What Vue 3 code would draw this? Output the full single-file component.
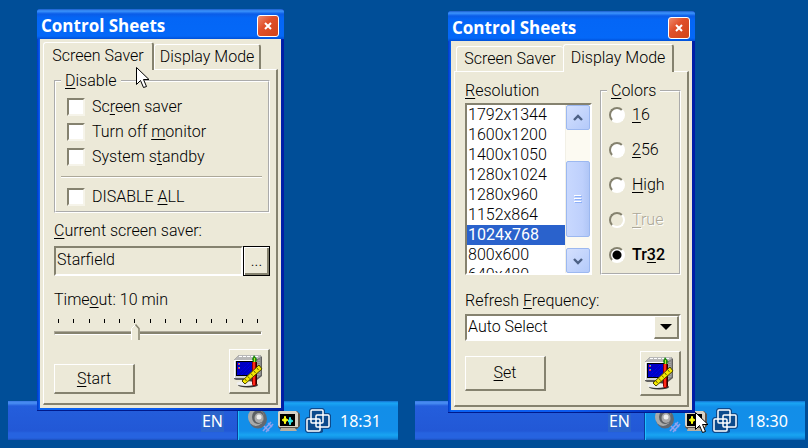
<script setup>
import { ref } from 'vue'

const screens = [
  { id: 'saver', active: 'saver', clock: '18:31' },
  { id: 'mode', active: 'mode', clock: '18:30' },
]

const tabs = [
  { id: 'saver', label: 'Screen Saver' },
  { id: 'mode', label: 'Display Mode' },
]

// label is split around the accelerator key
const disableOptions = [
  { id: 'screen', label: ['Sc', 'r', 'een saver'] },
  { id: 'monitor', label: ['Turn off ', 'm', 'onitor'] },
  { id: 'standby', label: ['System s', 't', 'andby'] },
]

const colors = [
  { id: '16', label: ['', '1', '6'] },
  { id: '256', label: ['', '2', '56'] },
  { id: 'high', label: ['', 'H', 'igh'] },
  { id: 'true', label: ['', 'T', 'rue'], disabled: true },
  { id: 'tr32', label: ['Tr', '3', '2'] },
]

const resolutions = [
  '1792x1344',
  '1600x1200',
  '1400x1050',
  '1280x1024',
  '1280x960',
  '1152x864',
  '1024x768',
  '800x600',
  '640x480',
]

const disabled = ref([])
const disableAll = ref(false)
const saver = ref('Starfield')
const timeout = ref(5)
const resolution = ref('1024x768')
const color = ref('tr32')
const frequency = ref('Auto Select')
</script>

<template>
  <main class="desktop">
    <section v-for="screen in screens" :key="screen.id" :class="['scene', `scene--${screen.id}`]">
      <div class="window">
        <header class="window__title">
          <h1 class="window__name">Control Sheets</h1>
          <button class="window__close" type="button" aria-label="Close">
            <svg width="8" height="8" viewBox="0 0 8 8"><path d="M1 1l6 6M7 1l-6 6" stroke="#fff" stroke-width="2" /></svg>
          </button>
        </header>

        <div class="window__body">
          <div class="tabs" role="tablist">
            <button
              v-for="tab in tabs"
              :key="tab.id"
              type="button"
              role="tab"
              :aria-selected="tab.id === screen.active"
              :class="['tab', { 'tab--active': tab.id === screen.active }]"
            >
              {{ tab.label }}
            </button>
          </div>

          <div v-if="screen.active === 'saver'" class="panel panel--saver">
            <fieldset class="group group--disable">
              <legend class="group__legend"><u>D</u>isable</legend>
              <label v-for="option in disableOptions" :key="option.id" class="check">
                <input v-model="disabled" class="check__box" type="checkbox" :value="option.id" />
                <span>{{ option.label[0] }}<u>{{ option.label[1] }}</u>{{ option.label[2] }}</span>
              </label>
              <hr class="group__line" />
              <label class="check">
                <input v-model="disableAll" class="check__box" type="checkbox" />
                <span>DISABLE <u>A</u>LL</span>
              </label>
            </fieldset>

            <label class="caption caption--current" for="current"><u>C</u>urrent screen saver:</label>
            <div class="current">
              <input id="current" v-model="saver" class="current__field" type="text" readonly />
              <button class="current__browse" type="button">...</button>
            </div>

            <label class="caption caption--timeout" for="timeout">Time<u>o</u>ut: 10 min</label>
            <div class="slider">
              <div class="slider__ticks"><i v-for="n in 14" :key="n" class="slider__tick"></i></div>
              <input id="timeout" v-model="timeout" class="slider__range" type="range" min="0" max="13" />
            </div>

            <div class="actions">
              <button class="button" type="button"><u>S</u>tart</button>
              <button class="button button--icon" type="button" aria-label="Display properties">
                <svg width="32" height="34"><use href="#display-icon" /></svg>
              </button>
            </div>
          </div>

          <div v-else class="panel panel--mode">
            <div class="columns">
              <div class="resolution">
                <span id="resolution" class="caption"><u>R</u>esolution</span>
                <div class="listbox">
                  <ul class="listbox__items" role="listbox" aria-labelledby="resolution">
                    <li
                      v-for="item in resolutions"
                      :key="item"
                      role="option"
                      :aria-selected="item === resolution"
                      :class="['listbox__item', { 'listbox__item--selected': item === resolution }]"
                      @click="resolution = item"
                    >
                      {{ item }}
                    </li>
                  </ul>
                  <div class="scroll">
                    <button class="scroll__button" type="button" aria-label="Up">
                      <svg width="10" height="8" viewBox="0 0 10 8"><path d="M1 6l4-4 4 4" fill="none" stroke="#4d6185" stroke-width="2.4" /></svg>
                    </button>
                    <div class="scroll__track">
                      <div class="scroll__thumb">
                        <svg width="8" height="9" viewBox="0 0 8 9"><path d="M0 .5h7M0 3.5h7M0 6.5h7" stroke="#fff" /><path d="M1 1.5h7M1 4.5h7M1 7.5h7" stroke="#8cb0f8" /></svg>
                      </div>
                    </div>
                    <button class="scroll__button" type="button" aria-label="Down">
                      <svg width="10" height="8" viewBox="0 0 10 8"><path d="M1 2l4 4 4-4" fill="none" stroke="#4d6185" stroke-width="2.4" /></svg>
                    </button>
                  </div>
                </div>
              </div>

              <fieldset class="group group--colors">
                <legend class="group__legend"><u>C</u>olors</legend>
                <label
                  v-for="item in colors"
                  :key="item.id"
                  :class="['radio', { 'radio--disabled': item.disabled, 'radio--current': item.id === color }]"
                >
                  <input v-model="color" class="radio__dot" type="radio" name="colors" :value="item.id" :disabled="item.disabled" />
                  <span>{{ item.label[0] }}<u>{{ item.label[1] }}</u>{{ item.label[2] }}</span>
                </label>
              </fieldset>
            </div>

            <label class="caption caption--frequency" for="frequency">Refresh <u>F</u>requency:</label>
            <div class="combo">
              <select id="frequency" v-model="frequency" class="combo__select">
                <option>Auto Select</option>
              </select>
              <span class="combo__arrow">
                <svg width="12" height="6" viewBox="0 0 12 6"><path d="M0 0h12l-6 6z" /></svg>
              </span>
            </div>

            <div class="actions actions--mode">
              <button class="button button--tall" type="button"><u>S</u>et</button>
              <button class="button button--icon" type="button" aria-label="Display properties">
                <svg width="32" height="34"><use href="#display-icon" /></svg>
              </button>
            </div>
          </div>
        </div>
      </div>

      <footer class="taskbar">
        <span class="taskbar__lang">EN</span>
        <div class="tray">
          <svg class="tray__speaker" width="26" height="26" viewBox="0 0 26 26">
            <ellipse cx="10" cy="11" rx="9" ry="9.5" fill="#626870" />
            <ellipse cx="8" cy="9" rx="8" ry="9" fill="#a9aaa9" />
            <ellipse cx="10" cy="9" rx="6" ry="7" fill="#5d6063" />
            <ellipse cx="11" cy="10" rx="4.5" ry="5" fill="#aaa" />
            <circle cx="11" cy="9" r="2.5" fill="#eee" />
            <path d="M15 23l8-9M18 24l7-8M16 18l5 5M20 15l4 4" stroke="#8fa2ee" stroke-width="1.6" />
          </svg>
          <svg class="tray__monitor" width="24" height="22" viewBox="0 0 24 22">
            <path d="M3 1h17l3 3v12l-3 3H3l-2-2V3z" fill="#5d564e" />
            <path d="M1 2l1-1h17l2 2v14H2l-1-2z" fill="#d8d2c4" />
            <path d="M4 18h14l2 3H3z" fill="#b9b09f" />
            <path d="M3 4h15v12H3z" fill="#000" />
            <path d="M8 6l1 3 2 1-2 1-1 3-1-3-2-1 2-1z" fill="#ffff10" stroke="#ffff10" />
            <path d="M13 7l1 3 2 1-2 1-1 3-1-3-1-1 1-1z" fill="#30e8e8" stroke="#30e8e8" />
          </svg>
          <svg class="tray__squares" width="26" height="26" viewBox="0 0 26 26">
            <path d="M6 0h12l2 2v3h4l2 2v12l-2 2h-6v3l-2 1H2l-2-2V11l2-2h2V2z" fill="#0c4a8c" />
            <g fill="none" stroke="#fff" stroke-width="1.5">
              <rect x="6" y="2" width="12" height="13" rx="1" />
              <rect x="11" y="7" width="13" height="12" rx="1" />
              <rect x="2" y="11" width="13" height="12" rx="1" />
            </g>
          </svg>
          <time class="tray__clock">{{ screen.clock }}</time>
        </div>
      </footer>

      <svg class="cursor" width="14" height="22" viewBox="0 0 14 22">
        <path d="M.5 .5v17l4-4 3 7 3-1-3-7h5.500z" fill="#fff" stroke="#000" />
      </svg>
    </section>

    <svg class="defs" width="0" height="0" aria-hidden="true">
      <symbol id="display-icon" viewBox="0 0 32 34">
        <path d="M6 1h21l2 2v19l-5 4H3l-2-1V6z" fill="#606060" />
        <path d="M6 1h21l1 2-5 3H1z" fill="#b8b8b8" />
        <path d="M6 2.500h20" stroke="#fff" stroke-dasharray="3 1" />
        <path d="M23 7l5-4v18l-5 4z" fill="#8c8c8c" />
        <path d="M24 8v15M26 6v15" stroke="#bbb" stroke-dasharray="1 1" />
        <path d="M1 6h22v18H1z" fill="#d4d4d4" />
        <path d="M1.500 24V6.500H23" fill="none" stroke="#fff" />
        <path d="M3 7h17v15H3z" fill="#000" />
        <path d="M4 8h15v13H4z" fill="#0000c4" />
        <path d="M8 21L19 10M12 21l7-7M4 21L16 9" stroke="#0000ff" stroke-dasharray="1 1" />
        <path d="M5 9h2v2H5zM5 13h2v2H5z" fill="#e02060" />
        <path d="M6 9h1v1H6zM6 13h1v1H6z" fill="#20f0c0" />
        <path d="M9 25h12v4H9z" fill="#444" />
        <ellipse cx="15" cy="31" rx="10" ry="2.500" fill="#333" />
        <ellipse cx="13" cy="29.500" rx="9.500" ry="2.500" fill="#f0f0f0" />
        <path d="M19 8h5v22l-2 2h-2l-1-2z" fill="#900000" />
        <path d="M20 8h2v23h-2z" fill="#ff2a1a" />
        <path d="M23.500 8v22" stroke="#300" />
        <path d="M21 1l3 4-1 3h-3l-1-3z" fill="#208a10" />
        <path d="M21 4h1v4h-1z" fill="#b8f020" />
        <path d="M9 27L26 11l3 4-17 15z" fill="#f4e800" stroke="#4a4400" />
        <path d="M12 25l1.500 2M15 22.500l1.500 2M18 19.500l1.500 2M21 17l1.500 2M24 14l1.500 2" stroke="#6a6200" />
      </symbol>
    </svg>
  </main>
</template>

<style>
body {
  margin: 0;
  background: #004e98;
}
</style>

<style scoped>
.desktop {
  box-sizing: border-box;
  min-height: 100vh;
  padding: 0 3px 8px 8px;
  display: flex;
  gap: 17px;
  background: #004e98;
  color: #000;
  font: 300 16px/20px Roboto, 'Liberation Sans', sans-serif;
}

.desktop * {
  box-sizing: border-box;
}

button,
input,
select {
  margin: 0;
  padding: 0;
  border: 0;
  border-radius: 0;
  color: inherit;
  font: inherit;
}

u {
  text-decoration-thickness: 1px;
  text-underline-offset: 2px;
  text-decoration-skip-ink: none;
}

.scene {
  position: relative;
  flex: 1;
  display: flex;
  align-items: flex-end;
}

/* window */
.window {
  position: absolute;
  z-index: 1;
  top: 9px;
  left: 29px;
  width: 247px;
  padding: 0 3px 3px;
  border-radius: 3px 3px 0 0;
  background: linear-gradient(to right, #0038c8 0, #0a64f4 3px, #0a5af0 50%, #001ea6 100%);
  box-shadow: inset 0 -1px #001a8c;
}

.scene--mode .window {
  top: 11px;
  left: 33px;
}

.window__title {
  display: flex;
  align-items: center;
  justify-content: space-between;
  height: 30px;
  margin: 0 -3px;
  padding: 3px 5px 0 4px;
  border-radius: 3px 3px 0 0;
  background: linear-gradient(#1c5ccc 0, #3c94fc 2px, #0a5ce8 5px, #0466f6 9px, #0468f8 27px, #0050d8 30px);
  color: #fff;
}

.window__name {
  margin: 0;
  font: bold 17px/24px 'Open Sans', 'Noto Sans', sans-serif;
}

.window__close {
  display: grid;
  place-items: center;
  width: 22px;
  height: 22px;
  border: 1px solid #fff;
  border-radius: 3px;
  background: linear-gradient(135deg, #ee8a6c, #e0502a 40%, #d04418);
}

.window__body {
  padding: 3px;
  background: #ece9d8;
}

/* tabs */
.tabs {
  display: flex;
  align-items: flex-end;
  height: 27px;
}

.tab {
  width: 107px;
  height: 25px;
  border: 1px solid #fff;
  border-right: 2px solid #85826f;
  border-bottom: 0;
  border-radius: 3px 3px 0 0;
  background: #ece9d8;
  white-space: nowrap;
}

.tab--active {
  position: relative;
  width: 111px;
  height: 28px;
  margin-bottom: -1px;
  padding: 0 0 2px;
}

.scene--mode .tab:first-child {
  margin-left: 2px;
  border-right: 0;
}

.panel {
  padding: 0 6px 9px 10px;
  border: 1px solid #fff;
  border-right: 2px solid #85826f;
  border-bottom: 2px solid #85826f;
}

.panel--saver {
  padding-top: 1px;
}

.panel--mode {
  padding-top: 9px;
}

.caption {
  display: block;
}

.caption--current {
  margin: 8px 0 5px;
}

.caption--timeout {
  margin-top: 14px;
}

.caption--frequency {
  margin: 16px 0 3px;
}

.group {
  min-width: 0;
  margin: 0;
  border: 2px groove #fff;
}

.group__legend {
  padding: 0 4px;
}

.group--disable {
  padding: 3px 6px 2px 5px;
}

.group--colors {
  display: block;
  flex: 1;
  padding: 4px 5px 8px;
}

.group__line {
  height: 2px;
  margin: 7px 0 6px;
  border: 0;
  border-top: 1px solid #aca899;
  border-bottom: 1px solid #fff;
}

.check {
  display: flex;
  align-items: center;
  gap: 7px;
  height: 25px;
  padding-left: 6px;
}

.check__box {
  appearance: none;
  width: 18px;
  height: 18px;
  border: 2px solid;
  border-color: #85826f #f6f4ea #f6f4ea #85826f;
  background: #fff;
}

.check__box:checked {
  background: #333;
}

.current {
  display: flex;
  height: 30px;
}

.current__field {
  flex: 1;
  min-width: 0;
  padding: 0 1px 3px;
  border: 2px solid;
  border-color: #85826f #fff #fff #85826f;
  background: #ece9d8;
}

.current__browse {
  width: 27px;
  border: 1px solid #000;
  background: #ece9d8;
  box-shadow: inset 1px 1px #fff, inset -2px -2px #85826f;
}

/* slider */
.slider {
  width: 208px;
  padding-top: 9px;
}

.slider__ticks {
  display: flex;
  justify-content: space-between;
  height: 4px;
  padding: 0 4px;
}

.slider__tick {
  width: 1px;
  background: #000;
}

.slider__range {
  appearance: none;
  display: block;
  width: 100%;
  height: 20px;
  background: transparent;
}

.slider__range::-webkit-slider-runnable-track {
  height: 4px;
  border: 1px solid;
  border-color: #aca899 #fff #fff #aca899;
  background: #85826f;
}

.slider__range::-webkit-slider-thumb {
  appearance: none;
  width: 9px;
  height: 16px;
  margin-top: -8px;
  background: url("data:image/svg+xml,%3Csvg xmlns='http://www.w3.org/2000/svg' width='9' height='16'%3E%3Cpath d='M0 16V4l4-4 5 4v12z' fill='%23ece9d8'/%3E%3Cpath d='M.5 16V4.500l4-4' fill='none' stroke='%23fff'/%3E%3Cpath d='M4.500 .5l3.500 4V16' fill='none' stroke='%2385826f' stroke-width='1.500'/%3E%3C/svg%3E");
}

/* buttons */
.actions {
  display: flex;
  align-items: flex-end;
  justify-content: space-between;
  margin-top: 6px;
}

.actions--mode {
  align-items: center;
  margin-top: 10px;
}

.button {
  width: 81px;
  height: 30px;
  border: 1px solid #fff;
  border-right: 2px solid #85826f;
  border-bottom: 2px solid #85826f;
  background: #ece9d8;
}

.button--tall {
  height: 35px;
}

.button--icon {
  display: grid;
  place-items: center;
  width: 41px;
  height: 45px;
}

/* display mode */
.columns {
  display: flex;
  gap: 8px;
}

.resolution {
  width: 127px;
}

.listbox {
  display: flex;
  height: 172px;
  margin-top: 2px;
  border: 2px solid;
  border-color: #85826f #fff #fff #85826f;
  background: #fff;
}

.listbox__items {
  flex: 1;
  margin: 0;
  padding: 0;
  overflow: hidden;
  list-style: none;
}

.listbox__item {
  height: 20px;
  padding-left: 1px;
}

.listbox__item--selected {
  background: #2a62cc;
  color: #fff;
  font-weight: 400;
}

.scroll {
  display: flex;
  flex-direction: column;
  width: 25px;
  border-left: 1px solid #f2f0e6;
  background: #fcfaf2;
}

.scroll__button {
  display: grid;
  place-items: center;
  height: 25px;
  border: 1px solid #9cb8f0;
  border-radius: 2px;
  background: linear-gradient(135deg, #d4e0fe, #b4cafa);
}

.scroll__track {
  flex: 1;
  padding-top: 31px;
}

.scroll__thumb {
  display: grid;
  place-items: center;
  height: 76px;
  border: 1px solid #9cb8f0;
  border-radius: 2px;
  background: linear-gradient(to right, #c8d8fe, #bed0fc 70%, #b0c6f6);
}

.radio {
  display: flex;
  align-items: center;
  gap: 7px;
  padding-left: 2px;
}

.radio + .radio {
  margin-top: 15px;
}

.radio__dot {
  appearance: none;
  width: 16px;
  height: 16px;
  border: 2px solid;
  border-color: #85826f #fff #fff #85826f;
  border-radius: 50%;
  background: #fff;
}

.radio__dot:checked {
  background: radial-gradient(circle, #000 4px, #fff 5px);
}

.radio__dot:disabled {
  background: #ece9d8;
}

.radio--disabled {
  color: #aca899;
  text-shadow: 1px 1px #fff;
}

.radio--current {
  font-weight: 500;
}

.combo {
  position: relative;
  height: 27px;
}

.combo__select {
  appearance: none;
  width: 100%;
  height: 100%;
  padding: 0 1px 2px;
  border: 2px solid;
  border-color: #85826f #fff #fff #85826f;
  background: #fff;
}

.combo__arrow {
  position: absolute;
  top: 2px;
  right: 2px;
  bottom: 2px;
  display: grid;
  place-items: center;
  width: 25px;
  border: 1px solid #fff;
  border-right: 2px solid #85826f;
  border-bottom: 2px solid #85826f;
  background: #ece9d8;
  pointer-events: none;
}

/* taskbar */
.taskbar {
  flex: 1;
  display: flex;
  justify-content: flex-end;
  align-items: center;
  height: 39px;
  background: linear-gradient(#3a78e4 0, #4a90f4 2px, #245edc 5px, #2258d6 30px, #2663e0 32px, #2663e0 37px, #1c50c0 39px);
  color: #fff;
  font: 16px/22px 'Noto Sans', sans-serif;
}

.taskbar__lang {
  margin-right: 13px;
  padding: 0 1px;
  background: #2a64cc;
}

.tray {
  display: flex;
  align-items: center;
  width: 161px;
  height: 100%;
  padding-left: 10px;
  border-left: 1px solid #0a3c9c;
  background: linear-gradient(#1470d0 0, #1aa6f4 2px, #128ee8 6px, #128eea 30px, #18a4f2 34px, #1290e4 37px, #0c68c0 39px);
  box-shadow: inset 1px 0 #20c0fc;
}

.tray__speaker {
  margin-right: 3px;
}

.tray__monitor {
  margin-right: 4px;
}

.tray__squares {
  margin-right: 9px;
}

.cursor {
  position: absolute;
  z-index: 2;
  top: 67px;
  left: 128px;
}

.scene--mode .cursor {
  top: 412px;
  left: 280px;
}

.defs {
  position: absolute;
}
</style>
